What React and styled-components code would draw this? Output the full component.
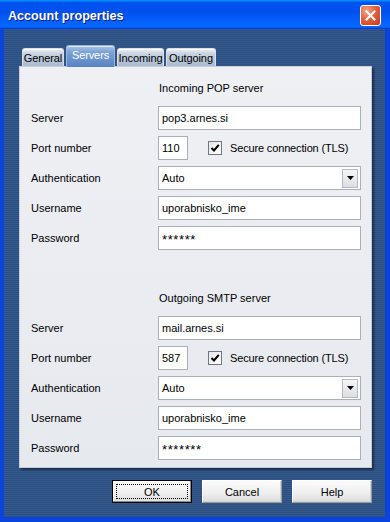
import React from 'react';
import styled, { createGlobalStyle } from 'styled-components';

const GlobalStyle = createGlobalStyle`
  html, body {
    margin: 0;
    padding: 0;
    background: #ffffff;
  }
  body {
    font-family: "Liberation Sans", Arial, sans-serif;
    font-size: 11px;
    color: #000;
  }
`;

const Window = styled.div`
  width: 390px;
  height: 522px;
  display: flex;
  flex-direction: column;
  box-sizing: border-box;
  background: #0b3fd6;
`;

const TitleBar = styled.div`
  height: 29px;
  flex: none;
  display: flex;
  align-items: center;
  justify-content: space-between;
  padding: 0 9px 0 8px;
  background: linear-gradient(180deg, #0997ff 0%, #0053ee 9%, #0050ee 40%, #0766ff 86%, #0766ff 92%, #005bff 95%, #003dd7 97%, #003dd7 100%);
`;

const Title = styled.span`
  font-family: "Liberation Sans", Arial, sans-serif;
  font-weight: bold;
  font-size: 12.6px;
  color: #ffffff;
  text-shadow: 1px 1px 0 #0a1a83;
  margin-top: 2px;
`;

const CloseButton = styled.div`
  width: 21px;
  height: 21px;
  margin-top: 2px;
  box-sizing: border-box;
  border: 1px solid #ffffff;
  border-radius: 3px;
  background: radial-gradient(circle at 30% 25%, #f0a488 0%, #e3623e 45%, #c8381a 100%);
  display: flex;
  align-items: center;
  justify-content: center;
`;

const Frame = styled.div`
  flex: 1;
  display: flex;
  border-left: 4px solid #0a44dc;
  border-right: 5px solid #0a44dc;
  border-bottom: 5px solid #0a44dc;
  box-shadow: inset 1px 0 0 #2a6cf0;
`;

const Client = styled.div`
  flex: 1;
  display: flex;
  flex-direction: column;
  padding: 16px 13px 14px 15px;
  background: repeating-linear-gradient(180deg, #36598b 0px, #36598b 1px, #2c4f81 1px, #2c4f81 2px);
`;

const TabStrip = styled.div`
  display: flex;
  align-items: flex-end;
  gap: 2px;
  padding-left: 3px;
  height: 21px;
  position: relative;
  z-index: 2;
`;

const Tab = styled.div`
  width: ${p => p.$w}px;
  height: ${p => (p.$active ? 22 : 18)}px;
  margin-bottom: ${p => (p.$active ? -1 : 0)}px;
  box-sizing: border-box;
  display: flex;
  align-items: center;
  justify-content: center;
  padding-bottom: ${p => (p.$active ? 3 : 0)}px;
  border: 1px solid ${p => (p.$active ? '#9bb8dd' : '#d8dee6')};
  border-bottom: none;
  border-radius: 3px 3px 0 0;
  color: ${p => (p.$active ? '#ffffff' : '#000000')};
  letter-spacing: -0.1px;
  background: ${p =>
    p.$active
      ? 'linear-gradient(180deg, #a9c4e8 0%, #7aa1d6 30%, #5883c2 100%)'
      : 'linear-gradient(180deg, #eef1f5 0%, #cbd5e2 25%, #a9b9ce 100%)'};
  box-shadow: ${p => (p.$active ? 'inset 0 1px 0 #dbe7f7' : 'inset 0 1px 0 #ffffff')};
`;

const Panel = styled.div`
  height: 402px;
  box-sizing: border-box;
  padding: 6px 10px 6px 10px;
  border: 1px solid #c9ced6;
  background: linear-gradient(180deg, #eef0f4 0%, #e6e9ee 100%);
  box-shadow: 2px 2px 2px rgba(0, 0, 0, 0.45);
  display: grid;
  grid-template-columns: 128px 1fr;
  grid-auto-rows: 30px;
  align-items: center;
`;

const Heading = styled.div`
  grid-column: 2;
  padding-left: 1px;
`;

const Spacer = styled.div`
  grid-column: 1 / span 2;
`;

const Label = styled.div`
  padding-left: 1px;
`;

const Field = styled.div`
  height: 24px;
  box-sizing: border-box;
  width: ${p => (p.$w ? `${p.$w}px` : '100%')};
  border: 1px solid #a9b0ba;
  background: #ffffff;
  display: flex;
  align-items: center;
  padding: 0 3px;
  flex: none;
`;

const Secret = styled.span`
  font-size: 13px;
  letter-spacing: 0.6px;
  line-height: 1;
  margin-top: 3px;
`;

const PortRow = styled.div`
  display: flex;
  align-items: center;
`;

const TlsText = styled.span`
  letter-spacing: -0.15px;
`;

const CheckBox = styled.div`
  width: 14px;
  height: 14px;
  box-sizing: border-box;
  margin-left: 20px;
  margin-right: 8px;
  border: 1px solid #6f7780;
  background: linear-gradient(135deg, #e4e6ea 0%, #ffffff 100%);
  display: flex;
  align-items: center;
  justify-content: center;
`;

const SelectField = styled(Field)`
  padding: 0 2px 0 3px;
  justify-content: space-between;
`;

const DropButton = styled.div`
  width: 16px;
  height: 19px;
  box-sizing: border-box;
  border: 1px solid #b4bac3;
  background: linear-gradient(180deg, #f6f6f6 0%, #dcdee2 100%);
  display: flex;
  align-items: center;
  justify-content: center;
`;

const ButtonRow = styled.div`
  display: flex;
  justify-content: flex-end;
  gap: 10px;
  margin-top: 12px;
`;

const Button = styled.div`
  width: 80px;
  height: 23px;
  box-sizing: border-box;
  position: relative;
  display: flex;
  align-items: center;
  justify-content: center;
  border: 1px solid ${p => (p.$default ? '#000000' : '#9a9a9a')};
  border-top-color: ${p => (p.$default ? '#000000' : '#ffffff')};
  border-left-color: ${p => (p.$default ? '#000000' : '#ffffff')};
  background: linear-gradient(180deg, #fbfbfb 0%, #eeeeee 60%, #dcdcdc 100%);
  box-shadow: ${p => (p.$default ? 'inset -1px -1px 0 #8a8a8a, inset 1px 1px 0 #ffffff' : 'inset -1px -1px 0 #d0d0d0')};

  &::after {
    content: '';
    display: ${p => (p.$default ? 'block' : 'none')};
    position: absolute;
    inset: 3px;
    border: 1px dotted #000000;
  }
`;

const CheckMark = () => (
  <svg width="10" height="10" viewBox="0 0 10 10">
    <path d="M1.5 5 L4 7.5 L8.8 1.8" fill="none" stroke="#000" strokeWidth="2" />
  </svg>
);

const Arrow = () => (
  <svg width="7" height="4" viewBox="0 0 7 4">
    <path d="M0 0 H7 L3.5 4 Z" fill="#000" />
  </svg>
);

const CloseX = () => (
  <svg width="11" height="11" viewBox="0 0 11 11">
    <path d="M1.5 1.5 L9.5 9.5 M9.5 1.5 L1.5 9.5" stroke="#fff" strokeWidth="2" strokeLinecap="square" />
  </svg>
);

const ServerSection = ({ title, server, port, password }) => (
  <>
    <Heading>{title}</Heading>
    <Label>Server</Label>
    <Field>{server}</Field>
    <Label>Port number</Label>
    <PortRow>
      <Field $w={30}>{port}</Field>
      <CheckBox><CheckMark /></CheckBox>
      <TlsText>Secure connection (TLS)</TlsText>
    </PortRow>
    <Label>Authentication</Label>
    <SelectField>
      <span>Auto</span>
      <DropButton><Arrow /></DropButton>
    </SelectField>
    <Label>Username</Label>
    <Field>uporabnisko_ime</Field>
    <Label>Password</Label>
    <Field><Secret>{password}</Secret></Field>
  </>
);

const tabs = [
  { name: 'General', w: 42 },
  { name: 'Servers', w: 49, active: true },
  { name: 'Incoming', w: 47 },
  { name: 'Outgoing', w: 50 },
];

export default function App() {
  return (
    <>
      <GlobalStyle />
      <Window>
        <TitleBar>
          <Title>Account properties</Title>
          <CloseButton><CloseX /></CloseButton>
        </TitleBar>
        <Frame>
          <Client>
            <TabStrip>
              {tabs.map(t => (
                <Tab key={t.name} $w={t.w} $active={t.active}>{t.name}</Tab>
              ))}
            </TabStrip>
            <Panel>
              <ServerSection title="Incoming POP server" server="pop3.arnes.si" port="110" password="******" />
              <Spacer />
              <ServerSection title="Outgoing SMTP server" server="mail.arnes.si" port="587" password="*******" />
            </Panel>
            <ButtonRow>
              <Button $default>OK</Button>
              <Button>Cancel</Button>
              <Button>Help</Button>
            </ButtonRow>
          </Client>
        </Frame>
      </Window>
    </>
  );
}
